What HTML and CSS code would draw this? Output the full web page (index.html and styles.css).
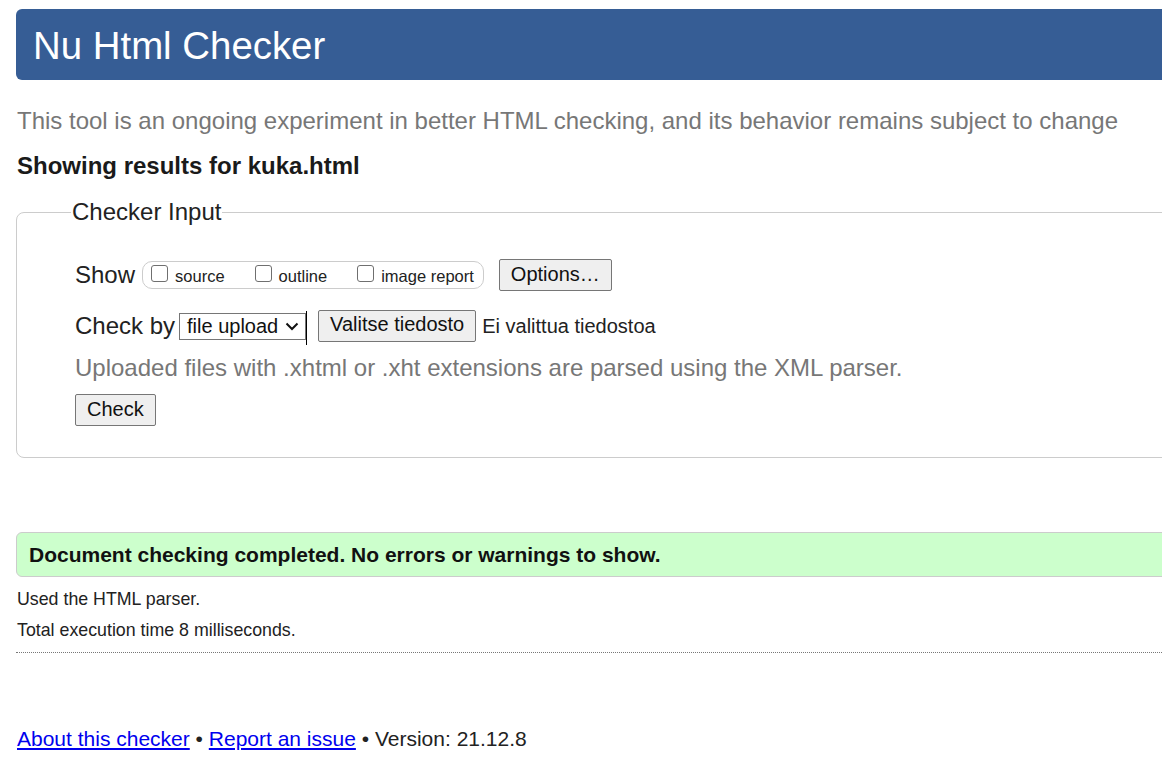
FILE: index.html
```html
<!DOCTYPE html>
<html lang="en">
<head>
<meta charset="utf-8">
<title>Nu Html Checker</title>
<link rel="stylesheet" href="styles.css">
</head>
<body>
<div class="page">
  <h1 class="banner">Nu Html Checker</h1>
  <p class="tagline">This tool is an ongoing experiment in better HTML checking, and its behavior remains subject to change</p>
  <p class="showing">Showing results for kuka.html</p>
  <fieldset class="input">
    <legend>Checker Input</legend>
    <div class="row show-row">
      <span class="lbl">Show</span>
      <span class="opts">
        <label><input type="checkbox">source</label>
        <label><input type="checkbox">outline</label>
        <label><input type="checkbox">image report</label>
      </span>
      <button class="btn">Options…</button>
    </div>
    <div class="row check-row">
      <span class="lbl">Check by</span>
      <span class="sel">file upload
        <svg class="chev" width="14" height="9" viewBox="0 0 14 9"><path d="M1.5 1.5 L7 7 L12.5 1.5" fill="none" stroke="#111" stroke-width="2"/></svg>
      </span>
      <span class="caret"></span>
      <button class="btn file-btn">Valitse tiedosto</button>
      <span class="nofile">Ei valittua tiedostoa</span>
    </div>
    <p class="hint">Uploaded files with .xhtml or .xht extensions are parsed using the XML parser.</p>
    <button class="btn">Check</button>
  </fieldset>
  <p class="success">Document checking completed. No errors or warnings to show.</p>
  <p class="details first">Used the HTML parser.</p>
  <p class="details">Total execution time 8 milliseconds.</p>
  <hr class="dotted">
  <p class="footer"><a href="#">About this checker</a> • <a href="#">Report an issue</a> • Version: 21.12.8</p>
</div>
</body>
</html>
```
FILE: styles.css
```css
html { overflow: hidden; }
body {
  margin: 0;
  font-family: "Liberation Sans", Arial, sans-serif;
  color: #222;
  background: #fff;
}
.page {
  width: 1200px;
  padding: 9px 0 0 16px;
}
.banner {
  margin: 0;
  height: 71px;
  box-sizing: border-box;
  padding: 15px 0 0 17px;
  background: #365d95;
  color: #fff;
  font-size: 38.4px;
  font-weight: normal;
  line-height: 44px;
  border-radius: 6px 0 0 6px;
}
.tagline {
  margin: 27px 0 0 1px;
  font-size: 24px;
  line-height: 28px;
  color: #777;
}
.showing {
  margin: 17px 0 0 1px;
  font-size: 24px;
  line-height: 28px;
  font-weight: bold;
  color: #1a1a1a;
}
.input {
  margin: 18px 0 0 0;
  padding: 0 0 31px 58px;
  border: 1px solid #ccc;
  border-radius: 8px;
}
.input legend {
  font-size: 24px;
  line-height: 28px;
  padding: 0 1px;
  margin-left: -4px;
  color: #222;
}
.row {
  display: flex;
  align-items: center;
  height: 32px;
  font-size: 24px;
  color: #222;
}
.show-row { margin-top: 33px; }
.lbl { margin-right: 7px; }
.opts {
  display: inline-flex;
  align-items: center;
  gap: 30px;
  border: 1px solid #ccc;
  border-radius: 10px;
  padding: 2px 9px 0 8px;
  height: 28px;
  box-sizing: border-box;
  font-size: 16.5px;
  margin-right: 15px;
}
.opts label { display: inline-flex; align-items: center; }
.opts input {
  appearance: none;
  -webkit-appearance: none;
  box-sizing: border-box;
  width: 17px;
  height: 17px;
  margin: -5px 7px 0 0;
  border: 1px solid #6f6f6f;
  border-radius: 3px;
  background: #fff;
}
.btn {
  font-family: "Liberation Sans", Arial, sans-serif;
  font-size: 20px;
  color: #111;
  background: #efefef;
  border: 1px solid #767676;
  border-radius: 2px;
  padding: 3px 11px 4px;
}
.check-row { margin-top: 19px; }
.sel {
  display: inline-flex;
  align-items: center;
  justify-content: space-between;
  box-sizing: border-box;
  width: 127px;
  height: 27px;
  padding: 0 6px 0 7px;
  margin-left: -3px;
  font-size: 20px;
  border: 1px solid #767676;
  background: #fff;
  color: #111;
}
.chev { margin-top: 1px; }
.caret {
  width: 1px;
  height: 34px;
  background: #000;
  margin: 0 11px 0 0;
  align-self: flex-start;
  position: relative;
  top: 1px;
}
.file-btn { padding: 2px 11px 5px; }
.nofile { font-size: 20px; margin-left: 6px; }
.hint {
  margin: 12px 0 12px;
  font-size: 24px;
  line-height: 28px;
  color: #777;
}
.success {
  margin: 74px 0 0 0;
  padding: 10px 12px;
  height: 45px;
  box-sizing: border-box;
  background: #ccffcc;
  border: 1px solid #ccc;
  border-radius: 6px 0 0 6px;
  font-size: 21px;
  line-height: 24px;
  font-weight: bold;
  color: #111;
}
.details {
  margin: 10px 0 0 1px;
  font-size: 17.8px;
  line-height: 21px;
  color: #222;
}
.details.first { margin-top: 12px; }
.dotted {
  margin: 11px 0 0;
  border: 0;
  border-top: 1px dotted #777;
  height: 0;
}
.footer {
  margin: 73px 0 0 1px;
  font-size: 21px;
  line-height: 25px;
  color: #222;
}
.footer a { color: #0000ee; }
```
